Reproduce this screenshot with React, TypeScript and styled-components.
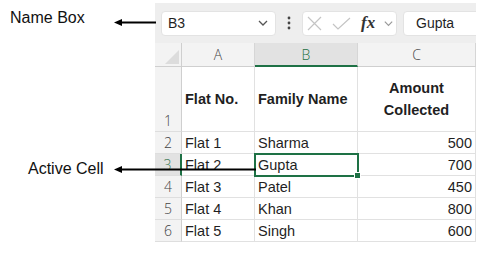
import React from 'react';
import styled, { createGlobalStyle } from 'styled-components';

const GlobalStyle = createGlobalStyle`
  html, body {
    margin: 0;
    padding: 0;
    background: #ffffff;
  }
  body {
    font-family: "Liberation Sans", Arial, sans-serif;
    color: #1f1f1f;
  }
`;

const GREEN = '#1e7145';

const Page = styled.div`
  position: relative;
  width: 503px;
  height: 266px;
  overflow: hidden;
`;

const Sheet = styled.div`
  margin-left: 155px;
  margin-top: 3px;
  width: 321px;
  overflow: hidden;
`;

const Toolbar = styled.div`
  display: flex;
  align-items: center;
  height: 40px;
  padding-left: 6px;
  background: #eeeeee;
  box-sizing: border-box;
`;

const Field = styled.div<{ $grow?: boolean }>`
  display: flex;
  align-items: center;
  width: ${(p) => (p.$grow ? 'auto' : '115px')};
  flex: ${(p) => (p.$grow ? '1 1 0' : '0 0 auto')};
  min-width: 0;
  margin-right: ${(p) => (p.$grow ? '-6px' : '0')};
  height: 25px;
  box-sizing: border-box;
  background: #ffffff;
  border: 1px solid #e3e3e3;
  border-radius: 4px;
  font-size: 14px;
  padding: 0 6px 0 ${(p) => (p.$grow ? '12px' : '6px')};
`;

const FieldText = styled.span`
  flex: 1;
  color: #1f1f1f;
`;

const Kebab = styled.div`
  width: 26px;
  flex-shrink: 0;
  display: flex;
  justify-content: center;
`;

const FormulaButtons = styled.div`
  display: flex;
  align-items: center;
  width: 95px;
  height: 25px;
  box-sizing: border-box;
  background: #ffffff;
  border: 1px solid #e3e3e3;
  border-radius: 4px;
  padding: 0 1px 0 4px;
  margin-right: 6px;
  flex-shrink: 0;
`;

const Gap = styled.span<{ $w: number }>`
  display: inline-block;
  width: ${(p) => p.$w}px;
  flex-shrink: 0;
`;

const Fx = styled.span`
  font-family: "Liberation Serif", "Times New Roman", serif;
  font-style: italic;
  font-weight: bold;
  font-size: 17px;
  color: #333;
  width: 16px;
`;

const Grid = styled.div`
  display: grid;
  grid-template-columns: 27px 73px 103px 118px;
  grid-template-rows: 24px 65px repeat(5, 22px);
`;

const Corner = styled.div`
  background: #f3f3f3;
  border-right: 1px solid #cfcfcf;
  border-bottom: 1px solid #cfcfcf;
  position: relative;
  &::after {
    content: '';
    position: absolute;
    right: 2px;
    bottom: 2px;
    border-style: solid;
    border-width: 0 0 14px 14px;
    border-color: transparent transparent #dcdcdc transparent;
  }
`;

const ColHead = styled.div<{ $active?: boolean }>`
  display: flex;
  align-items: center;
  justify-content: center;
  font-family: "Open Sans", "Liberation Sans", sans-serif;
  font-weight: 300;
  font-size: 14px;
  color: ${(p) => (p.$active ? GREEN : '#444')};
  background: ${(p) => (p.$active ? '#e2e2e2' : '#f3f3f3')};
  border-right: 1px solid #d6d6d6;
  border-bottom: ${(p) => (p.$active ? `2px solid ${GREEN}` : '1px solid #cfcfcf')};
  box-sizing: border-box;
`;

const RowHead = styled.div<{ $active?: boolean; $bottom?: boolean }>`
  display: flex;
  align-items: ${(p) => (p.$bottom ? 'flex-end' : 'center')};
  justify-content: center;
  font-family: "Open Sans", "Liberation Sans", sans-serif;
  font-weight: 300;
  font-size: 14px;
  color: ${(p) => (p.$active ? '#3d7a58' : '#444')};
  background: ${(p) => (p.$active ? '#e2e2e2' : '#f3f3f3')};
  border-right: ${(p) => (p.$active ? `2px solid ${GREEN}` : '1px solid #cfcfcf')};
  border-bottom: 1px solid #dedede;
  box-sizing: border-box;
  padding-bottom: ${(p) => (p.$bottom ? '1px' : '0')};
`;

const Cell = styled.div<{ $align?: 'left' | 'right' | 'center'; $bold?: boolean; $active?: boolean }>`
  position: relative;
  display: flex;
  align-items: center;
  justify-content: ${(p) =>
    p.$align === 'right' ? 'flex-end' : p.$align === 'center' ? 'center' : 'flex-start'};
  text-align: ${(p) => p.$align || 'left'};
  padding: 0 3px;
  font-size: 14.5px;
  font-weight: ${(p) => (p.$bold ? 'bold' : 'normal')};
  line-height: 22px;
  color: #1f1f1f;
  border-right: 1px solid #e1e1e1;
  border-bottom: 1px solid #e1e1e1;
  box-sizing: border-box;
  white-space: nowrap;
  ${(p) =>
    p.$active &&
    `
    outline: 2px solid ${GREEN};
    outline-offset: -1px;
    z-index: 1;
    &::after {
      content: '';
      position: absolute;
      right: -4px;
      bottom: -4px;
      width: 5px;
      height: 5px;
      background: ${GREEN};
      border: 1px solid #fff;
    }
  `}
`;

const Label = styled.div<{ $top: number; $left: number }>`
  position: absolute;
  top: ${(p) => p.$top}px;
  left: ${(p) => p.$left}px;
  font-family: "Liberation Sans", Arial, sans-serif;
  font-size: 16px;
  color: #111;
`;

const Overlay = styled.svg`
  position: absolute;
  left: 0;
  top: 0;
  pointer-events: none;
  z-index: 2;
`;

const rows = [
  ['Flat 1', 'Sharma', '500'],
  ['Flat 2', 'Gupta', '700'],
  ['Flat 3', 'Patel', '450'],
  ['Flat 4', 'Khan', '800'],
  ['Flat 5', 'Singh', '600'],
];

const Chevron: React.FC<{ size?: number; color?: string }> = ({ size = 12, color = '#555' }) => (
  <svg width={size} height={size} viewBox="0 0 12 12">
    <path d="M2 4 L6 8 L10 4" fill="none" stroke={color} strokeWidth="1.3" />
  </svg>
);

const App: React.FC = () => (
  <Page>
    <GlobalStyle />
    <Sheet>
      <Toolbar>
        <Field>
          <FieldText>B3</FieldText>
          <Chevron />
        </Field>
        <Kebab>
          <svg width="4" height="14" viewBox="0 0 4 14">
            <circle cx="2" cy="2" r="1.4" fill="#444" />
            <circle cx="2" cy="7" r="1.4" fill="#444" />
            <circle cx="2" cy="12" r="1.4" fill="#444" />
          </svg>
        </Kebab>
        <FormulaButtons>
          <svg width="15" height="15" viewBox="0 0 15 15">
            <path d="M1 1 L14 14 M14 1 L1 14" stroke="#c4c4c4" strokeWidth="1.2" />
          </svg>
          <Gap $w={10} />
          <svg width="19" height="15" viewBox="0 0 19 15">
            <path d="M1 8 L6 13 L18 2" fill="none" stroke="#c4c4c4" strokeWidth="1.2" />
          </svg>
          <Gap $w={10} />
          <Fx>fx</Fx>
          <Gap $w={6} />
          <Chevron size={11} color="#999" />
        </FormulaButtons>
        <Field $grow>
          <FieldText>Gupta</FieldText>
        </Field>
      </Toolbar>
      <Grid>
        <Corner />
        <ColHead>A</ColHead>
        <ColHead $active>B</ColHead>
        <ColHead>C</ColHead>

        <RowHead $bottom>1</RowHead>
        <Cell $bold>Flat No.</Cell>
        <Cell $bold>Family Name</Cell>
        <Cell $bold $align="center">
          Amount
          <br />
          Collected
        </Cell>

        {rows.map((r, i) => (
          <React.Fragment key={r[0]}>
            <RowHead $active={i === 1}>{i + 2}</RowHead>
            <Cell>{r[0]}</Cell>
            <Cell $active={i === 1}>{r[1]}</Cell>
            <Cell $align="right">{r[2]}</Cell>
          </React.Fragment>
        ))}
      </Grid>
    </Sheet>

    <Label $top={9} $left={10}>Name Box</Label>
    <Label $top={160} $left={28}>Active Cell</Label>
    <Overlay width="503" height="266">
      <path d="M121 22.5 L156 22.5" stroke="#000" strokeWidth="2" />
      <path d="M114 22.5 L122 19 L122 26 Z" fill="#000" />
      <path d="M121 169.5 L256 169.5" stroke="#000" strokeWidth="2" />
      <path d="M114 169.5 L122 166 L122 173 Z" fill="#000" />
    </Overlay>
  </Page>
);

export default App;
